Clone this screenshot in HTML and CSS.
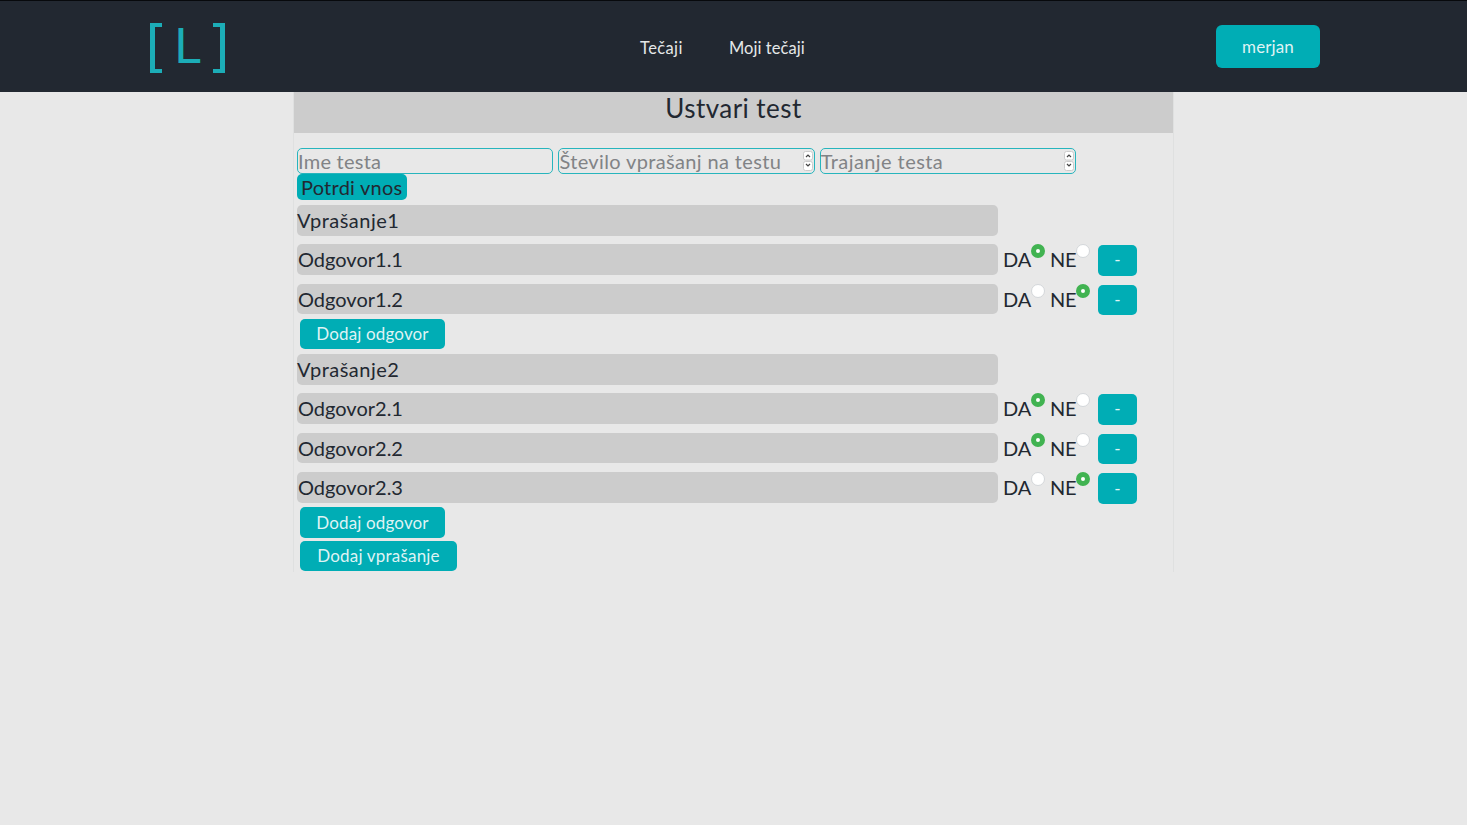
FILE: index.html
```
<!DOCTYPE html>
<html lang="sl">
<head>
<meta charset="utf-8">
<title>Ustvari test</title>
<link rel="stylesheet" href="styles.css">
</head>
<body>
<header class="header">
  <div class="logo"><span class="bracket bracket-left"></span><span class="logo-letter">L</span><span class="bracket bracket-right"></span></div>
  <nav class="nav"><a class="nav-first">Tečaji</a><a class="nav-second">Moji tečaji</a></nav>
  <button class="button user">merjan</button>
</header>
<main class="panel">
  <h1 class="title">Ustvari test</h1>
  <div class="form">
    <div class="settings">
      <div class="field"><span class="ph-name">Ime testa</span></div>
      <div class="field"><span class="ph-count">Število vprašanj na testu</span><span class="spinner"><svg viewBox="0 0 10 20"><rect x=".5" y=".5" width="9" height="8.5" rx="2"/><rect x=".5" y="10.5" width="9" height="9" rx="2"/><path d="M3 6l2-2 2 2M3 13l2 2 2-2"/></svg></span></div>
      <div class="field"><span class="ph-time">Trajanje testa</span><span class="spinner"><svg viewBox="0 0 10 20"><rect x=".5" y=".5" width="9" height="8.5" rx="2"/><rect x=".5" y="10.5" width="9" height="9" rx="2"/><path d="M3 6l2-2 2 2M3 13l2 2 2-2"/></svg></span></div>
    </div>
    <button class="confirm">Potrdi vnos</button>
    <section class="block">
      <div class="line question">Vprašanje1</div>
      <div class="answer"><div class="line">Odgovor1.1</div><label class="da">DA</label><i class="radio on"></i><label class="ne">NE</label><i class="radio"></i><button class="button remove">-</button></div>
      <div class="answer"><div class="line">Odgovor1.2</div><label class="da">DA</label><i class="radio"></i><label class="ne">NE</label><i class="radio on"></i><button class="button remove">-</button></div>
      <button class="button add-answer">Dodaj odgovor</button>
    </section>
    <section class="block">
      <div class="line question">Vprašanje2</div>
      <div class="answer"><div class="line">Odgovor2.1</div><label class="da">DA</label><i class="radio on"></i><label class="ne">NE</label><i class="radio"></i><button class="button remove">-</button></div>
      <div class="answer"><div class="line">Odgovor2.2</div><label class="da">DA</label><i class="radio on"></i><label class="ne">NE</label><i class="radio"></i><button class="button remove">-</button></div>
      <div class="answer"><div class="line">Odgovor2.3</div><label class="da">DA</label><i class="radio"></i><label class="ne">NE</label><i class="radio on"></i><button class="button remove">-</button></div>
      <button class="button add-answer">Dodaj odgovor</button>
    </section>
    <button class="button add-question">Dodaj vprašanje</button>
  </div>
</main>
</body>
</html>
```
FILE: styles.css
```
* { box-sizing: border-box; }
body { margin: 0; background: #e8e8e8; color: #222831; font: 20px/26px Lato, "Noto Sans", sans-serif; }
button { font-family: inherit; margin: 0; border: 0; padding: 0; display: block; white-space: nowrap; }

.header { height: 92.4px; background: #222831; border-top: 1px solid #07090c; display: grid; grid-template-columns: 490px 1fr 104px; column-gap: 0; padding: 0 147px 0 150px; align-items: center; }
.logo { display: flex; align-items: center; width: 75px; height: 50px; justify-content: space-between; margin-top: 2px; }
.bracket { width: 12px; height: 50px; border: solid #1cadb7; }
.bracket-left { border-width: 4px 0 4px 5px; }
.bracket-right { border-width: 4px 5px 4px 0; }
.logo-letter { font: 48px/50px "DejaVu Sans Mono", monospace; color: #1cadb7; padding: 0 0 4px 1px; }
.nav { display: flex; font-size: 16.5px; line-height: 24px; color: #e4e7e8; margin-top: 2px; }
.nav-first { width: 89px; letter-spacing: .4px; }
.nav-second { letter-spacing: .05px; }

.button { background: #00adb5; color: #dff3f4; border-radius: 5px; font-size: 17px; line-height: 30px; height: 30.5px; text-align: center; }
.user { width: 104px; height: 43px; line-height: 44px; letter-spacing: .1px; margin-top: 0; border-radius: 6px; }

.panel { width: 881px; margin-left: 293px; border: solid #dfe0e0; border-width: 0 1px; height: 479.6px; }
.title { margin: 0; height: 41px; background: #ccc; font-size: 26px; line-height: 32px; font-weight: 400; text-align: center; letter-spacing: .45px; }
.form { padding: 15px 0 0 3px; }
.settings { display: flex; gap: 5px; }
.field { width: 256.4px; height: 26px; border: 1px solid #27b5bd; border-radius: 5px; color: #818386; display: flex; justify-content: space-between; align-items: center; padding-right: 1px; white-space: nowrap; }
.ph-name { letter-spacing: .25px; }
.ph-count { letter-spacing: .36px; }
.ph-time { letter-spacing: .42px; }
.spinner { width: 10px; height: 20px; flex: none; }
.spinner svg { display: block; width: 10px; height: 20px; fill: #fff; stroke: #ccc; }
.spinner path { fill: none; stroke: #444; stroke-width: 1.2; }
.confirm { width: 109.5px; height: 26px; background: #00adb5; border-radius: 5px; color: #222831; font-size: 20px; line-height: 27px; letter-spacing: .25px; }
.block { padding-top: 5px; height: 149px; }
.block + .block { height: 191.5px; }
.line { width: 701px; height: 30.5px; background: #ccc; border-radius: 5px; line-height: 30px; padding-left: 1px; flex: none; }
.question { margin-bottom: 8.2px; letter-spacing: .5px; padding-left: 0; }
.answer { display: flex; height: 39.7px; align-items: flex-start; }
.da { width: 28px; margin-left: 5px; line-height: 30px; }
.ne { width: 27px; margin-left: 5px; line-height: 30px; letter-spacing: -.3px; }
.radio { width: 14px; height: 14px; flex: none; background: #fff; border: 1px solid #d4d7da; border-radius: 50%; }
.radio.on { border: 5px solid #41b351; }
.remove { width: 39px; margin: 1px 0 0 8px; }
.answer .radio:nth-of-type(2) { margin-left: -1px; }
.add-answer { margin: -4.8px 0 0 3px; width: 145px; letter-spacing: .15px; }
.add-question { margin: 0 0 0 3px; width: 157px; letter-spacing: .2px; }
```
